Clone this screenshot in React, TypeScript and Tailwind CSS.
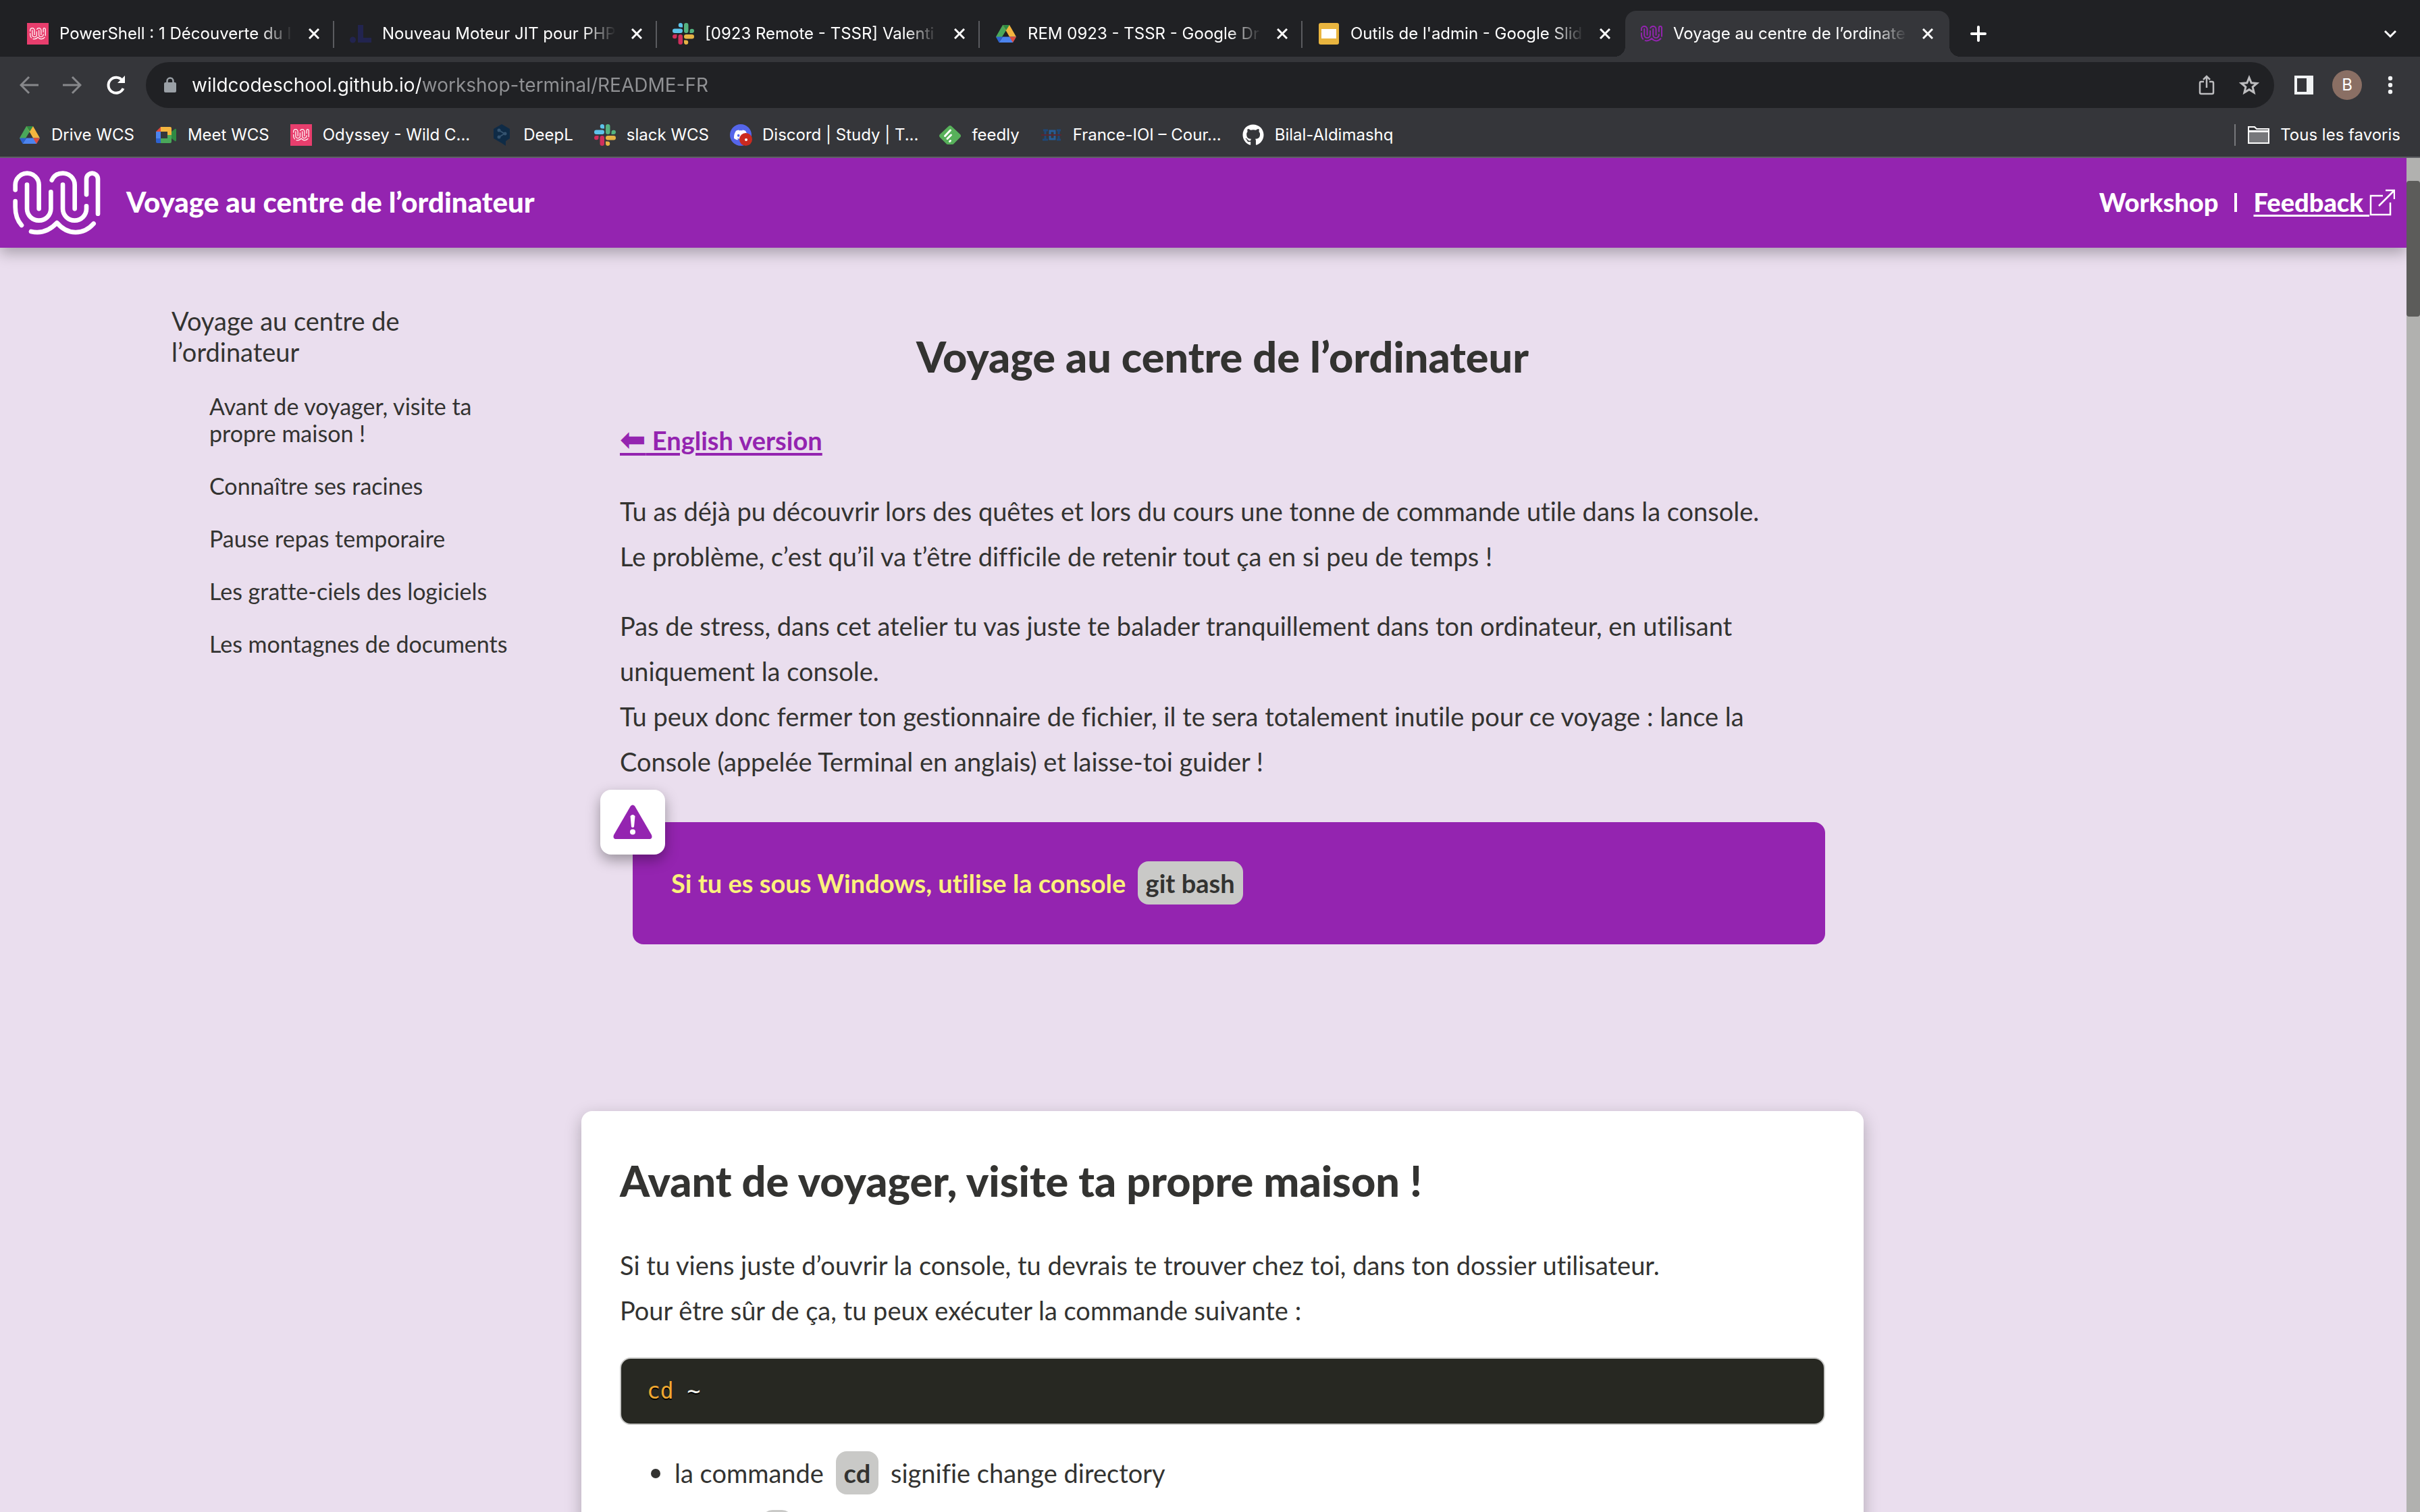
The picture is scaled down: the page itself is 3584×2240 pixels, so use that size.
import type { ReactNode } from "react";
import { FaGithub } from "react-icons/fa";
import { SiDiscord } from "react-icons/si";

function WildMark({ className, weight = 20 }: { className: string; weight?: number }) {
  return (
    <svg viewBox="57 63 390 285" className={className} fill="none" stroke="currentColor" strokeWidth={weight} strokeLinecap="round" strokeLinejoin="round" aria-hidden="true">
      <path d="M68 148V126A52.5 52 0 0 1 173 126V232" />
      <path d="M120 125V232A53 52 0 0 0 226 232V157" />
      <path d="M230 105C239 84 258 74 279 74A52.5 52 0 0 1 332 126V232" />
      <path d="M279 125V232A52.5 52 0 0 0 384 232V220" />
      <path d="M384 169V100A25.5 26 0 0 1 435 100V254" />
      <path d="M68 198V224C68 255 78 285 96 305" />
      <path d="M138 333C182 343 218 332 253 294C300 350 370 350 416 298" />
    </svg>
  );
}

function WildTile() {
  return (
    <span className="flex size-8 items-center justify-center bg-[#e83e6d] text-white">
      <WildMark className="w-6" />
    </span>
  );
}

function DriveIcon() {
  return (
    <svg viewBox="0 0 32 32" className="size-8" aria-hidden="true">
      <path d="M11 3L1 20.500L5.500 28L16 11Z" fill="#4aa85a" />
      <path d="M11 3H21L31 20.500H21Z" fill="#f4b53f" />
      <path d="M11 3H21L16 11Z" fill="#2f8a43" />
      <path d="M11 20.500H31L26 29H5.500Z" fill="#4c84ee" />
      <path d="M1 20.500H11L5.500 29Z" fill="#2d62cf" />
      <path d="M21 20.500H31L26 29Z" fill="#e04a3b" />
    </svg>
  );
}

function MeetIcon() {
  return (
    <svg viewBox="0 0 32 32" className="size-8" aria-hidden="true">
      <path d="M8 4L1 11H8Z" fill="#e04a3b" />
      <path d="M8 4H22Q24 4 24 6V16H18V11H8Z" fill="#f4b53f" />
      <path d="M1 11H8V21H1Z" fill="#4c84ee" />
      <path d="M1 21H8V28H3Q1 28 1 26Z" fill="#2d62cf" />
      <path d="M8 21H18V16H24V26Q24 28 22 28H8Z" fill="#4aa85a" />
      <path d="M24 11L29 7Q31 6 31 8V24Q31 26 29 25L24 21Z" fill="#2f8a43" />
    </svg>
  );
}

function SlackIcon() {
  return (
    <svg viewBox="0 0 32 32" className="size-8" aria-hidden="true">
      <g fill="#5dc3ea">
        <path d="M12 0A3.200 3.200 0 0 0 12 6.500H15V3.200A3.200 3.200 0 0 0 12 0Z" />
        <rect x="0" y="8.500" width="15" height="6.500" rx="3.200" />
      </g>
      <g fill="#54b380">
        <rect x="17" y="0" width="6.500" height="15" rx="3.200" />
        <path d="M32 12A3.200 3.200 0 0 0 25.500 12V15H28.800A3.200 3.200 0 0 0 32 12Z" />
      </g>
      <g fill="#e6b345">
        <rect x="17" y="17" width="15" height="6.500" rx="3.200" />
        <path d="M20 32A3.200 3.200 0 0 0 20 25.500H17V28.800A3.200 3.200 0 0 0 20 32Z" />
      </g>
      <g fill="#cf2f5d">
        <rect x="8.500" y="17" width="6.500" height="15" rx="3.200" />
        <path d="M0 20A3.200 3.200 0 0 0 6.500 20V17H3.200A3.200 3.200 0 0 0 0 20Z" />
      </g>
    </svg>
  );
}

function SlidesIcon() {
  return (
    <svg viewBox="0 0 32 32" className="size-8" aria-hidden="true">
      <rect x="1" y="0" width="30" height="32" rx="3" fill="#e9b53f" />
      <rect x="5" y="9" width="22" height="14" fill="#fff" />
    </svg>
  );
}

function DotLIcon() {
  return (
    <svg viewBox="0 0 32 32" className="size-8" fill="#22244f" aria-hidden="true">
      <circle cx="4.500" cy="25" r="4.500" />
      <path d="M12 3H20V22H32V29H12Z" />
    </svg>
  );
}

function DeepLIcon() {
  return (
    <svg viewBox="0 0 32 32" className="size-8" aria-hidden="true">
      <path d="M16 0L28 7V21L22 25V32L16 28L4 21V7Z" fill="#0f2b46" />
      <g stroke="#35536f" strokeWidth="2" fill="#35536f">
        <path d="M12 9L20 14L12 19" fill="none" />
        <circle cx="12" cy="9" r="1.500" />
        <circle cx="21" cy="14" r="1.500" />
        <circle cx="12" cy="19" r="1.500" />
      </g>
    </svg>
  );
}

function DiscordIcon() {
  return (
    <span className="relative flex size-8 items-center justify-center rounded-full bg-[#5566ea] text-white">
      <SiDiscord className="size-5" />
      <span className="absolute -right-px bottom-0 flex size-[19px] items-center justify-center rounded-full bg-[#cb2a20]">
        <span className="size-1 rounded-full bg-white" />
      </span>
    </span>
  );
}

function FeedlyIcon() {
  return (
    <svg viewBox="0 0 32 32" className="size-8" aria-hidden="true">
      <path d="M13.500 3.200Q16 1 18.500 3.200L31 15Q33 17 31 19.500L22 28.500Q21 30 19 30H13Q11 30 10 28.500L1 19.500Q-1 17 1 15Z" fill="#57b05a" />
      <g stroke="#fff" strokeWidth="3" strokeLinecap="round">
        <path d="M8.500 17.500L16.500 9" />
        <path d="M12 21.500L17.500 16" />
        <path d="M15.500 25.500L16.500 24.500" />
      </g>
    </svg>
  );
}

function IoiIcon() {
  return (
    <svg viewBox="0 0 32 32" className="size-8" fill="none" strokeWidth="3" aria-hidden="true">
      <path d="M4 9H11M7 9V23M3 23H11" stroke="#1f4777" />
      <rect x="14" y="10" width="7" height="12" stroke="#265c96" />
      <path d="M24 9H30M27 9V23M24 23H30" stroke="#1f4777" />
      <path d="M1 16H31" stroke="#5a2530" strokeWidth="2" />
    </svg>
  );
}

function CloseIcon() {
  return (
    <svg viewBox="0 0 16 16" className="size-4" stroke="currentColor" strokeWidth="3" aria-hidden="true">
      <path d="M1 1L15 15M15 1L1 15" />
    </svg>
  );
}

const tabs: { title: string; icon: ReactNode }[] = [
  { title: "PowerShell : 1 Découverte du l", icon: <WildTile /> },
  { title: "Nouveau Moteur JIT pour PHP", icon: <DotLIcon /> },
  { title: "[0923 Remote - TSSR] Valenti", icon: <SlackIcon /> },
  { title: "REM 0923 - TSSR - Google Dr", icon: <DriveIcon /> },
  { title: "Outils de l'admin - Google Slid", icon: <SlidesIcon /> },
  { title: "Voyage au centre de l’ordinate", icon: <WildMark className="w-8 text-[#9424b0]" weight={24} /> },
];

const bookmarks: { title: string; icon: ReactNode }[] = [
  { title: "Drive WCS", icon: <DriveIcon /> },
  { title: "Meet WCS", icon: <MeetIcon /> },
  { title: "Odyssey - Wild C...", icon: <WildTile /> },
  { title: "DeepL", icon: <DeepLIcon /> },
  { title: "slack WCS", icon: <SlackIcon /> },
  { title: "Discord | Study | T...", icon: <DiscordIcon /> },
  { title: "feedly", icon: <FeedlyIcon /> },
  { title: "France-IOI – Cour...", icon: <IoiIcon /> },
  { title: "Bilal-Aldimashq", icon: <FaGithub className="size-8 text-white" /> },
];

const chapters = [
  "Avant de voyager, visite ta propre maison !",
  "Connaître ses racines",
  "Pause repas temporaire",
  "Les gratte-ciels des logiciels",
  "Les montagnes de documents",
];

function TabStrip() {
  return (
    <div className="flex h-[84px] shrink-0 items-end bg-[#202124] pl-[17px] pr-[35px] text-[24px] text-white">
      {tabs.map((tab, i) => {
        const active = i === tabs.length - 1;
        return (
          <div
            key={tab.title}
            className={
              active
                ? "relative flex h-[68px] w-[480px] items-center rounded-t-2xl bg-[#35363a] pl-[23px] pr-6"
                : "relative flex h-[68px] w-[478px] items-center pl-[23px] pr-[22px]"
            }
          >
            {active && (
              <>
                <span className="absolute -left-4 bottom-0 size-4 bg-[radial-gradient(circle_at_0_0,#202124_16px,#35363a_16px)]" />
                <span className="absolute -right-4 bottom-0 size-4 bg-[radial-gradient(circle_at_100%_0,#202124_16px,#35363a_16px)]" />
              </>
            )}
            {tab.icon}
            <a href="#" className="ml-4 w-[346px] overflow-hidden whitespace-nowrap [mask-image:linear-gradient(90deg,#000_86%,transparent)]">
              {tab.title}
            </a>
            <button type="button" aria-label="Fermer l’onglet" className="ml-auto">
              <CloseIcon />
            </button>
            {i < tabs.length - 2 && <span className="absolute right-0 top-[15px] h-10 w-0.5 bg-[#5a5b5f]" />}
          </div>
        );
      })}
      <button type="button" aria-label="Nouvel onglet" className="mb-[22px] ml-[31px]">
        <svg viewBox="0 0 24 24" className="size-6" stroke="currentColor" strokeWidth="4" strokeLinecap="round" aria-hidden="true">
          <path d="M12 2V22M2 12H22" />
        </svg>
      </button>
      <button type="button" aria-label="Rechercher dans les onglets" className="mb-[25px] ml-auto">
        <svg viewBox="0 0 18 18" className="size-[18px]" fill="none" stroke="currentColor" strokeWidth="3" aria-hidden="true">
          <path d="M1 5L9 13L17 5" />
        </svg>
      </button>
    </div>
  );
}

function Toolbar() {
  return (
    <div className="flex h-[84px] shrink-0 items-center bg-[#35363a] pl-[29px] pr-10">
      <button type="button" aria-label="Précédent" className="text-[#87888b]">
        <svg viewBox="0 0 28 28" className="size-7" fill="none" stroke="currentColor" strokeWidth="3" aria-hidden="true">
          <path d="M14 2L2 14L14 26M2 14H28" />
        </svg>
      </button>
      <button type="button" aria-label="Suivant" className="ml-9 text-[#87888b]">
        <svg viewBox="0 0 28 28" className="size-7" fill="none" stroke="currentColor" strokeWidth="3" aria-hidden="true">
          <path d="M14 2L26 14L14 26M26 14H0" />
        </svg>
      </button>
      <button type="button" aria-label="Actualiser" className="ml-9 text-white">
        <svg viewBox="0 0 30 30" className="size-[30px]" fill="none" stroke="currentColor" strokeWidth="4" aria-hidden="true">
          <path d="M25.500 20A11.500 11.500 0 1 1 24 8" />
          <path d="M28 1V12H17Z" fill="currentColor" stroke="none" />
        </svg>
      </button>
      <div className="ml-[29px] flex h-[68px] grow items-center rounded-full bg-[#202124] pl-[27px] pr-[22px]">
        <svg viewBox="0 0 18 24" className="h-6 w-[18px]" aria-hidden="true">
          <rect x="0" y="8" width="18" height="15" rx="2" fill="#9aa0a6" />
          <path d="M4.500 9V6A4.500 4.500 0 0 1 13.500 6V9" fill="none" stroke="#9aa0a6" strokeWidth="2.500" />
        </svg>
        <input
          aria-label="Adresse"
          defaultValue="wildcodeschool.github.io/workshop-terminal/README-FR"
          className="ml-[23px] grow bg-[linear-gradient(90deg,#fff_339px,#919295_339px)] bg-clip-text text-[28px] text-transparent outline-none"
        />
        <button type="button" aria-label="Partager" className="text-[#bdbdbf]">
          <svg viewBox="0 0 24 30" className="h-[30px] w-6" fill="none" stroke="currentColor" strokeWidth="2.500" aria-hidden="true">
            <path d="M8 10H4Q2 10 2 12V26Q2 28 4 28H20Q22 28 22 26V12Q22 10 20 10H16M12 19V2M7 7L12 2L17 7" />
          </svg>
        </button>
        <button type="button" aria-label="Ajouter aux favoris" className="ml-9 text-[#bdbdbf]">
          <svg viewBox="0 0 30 30" className="size-[30px]" fill="none" stroke="currentColor" strokeWidth="3" aria-hidden="true">
            <path d="M15 4L18.200 11.800L26.500 12.400L20.100 17.800L22.100 26L15 21.600L7.900 26L9.900 17.800L3.500 12.400L11.800 11.800Z" />
          </svg>
        </button>
      </div>
      <button type="button" aria-label="Panneau latéral" className="ml-[30px] text-[#f1f3f4]">
        <svg viewBox="0 0 28 28" className="size-7" fill="currentColor" fillRule="evenodd" aria-hidden="true">
          <path d="M0 0H28V28H0ZM4 4V24H18V4Z" />
        </svg>
      </button>
      <button type="button" className="ml-7 flex size-11 items-center justify-center rounded-full bg-[#8a6f64] text-[24px] text-white">
        B
      </button>
      <button type="button" aria-label="Menu" className="ml-[38px] text-[#f1f3f4]">
        <svg viewBox="0 0 8 28" className="h-7 w-2" fill="currentColor" aria-hidden="true">
          <circle cx="4" cy="4" r="3.200" />
          <circle cx="4" cy="14" r="3.200" />
          <circle cx="4" cy="24" r="3.200" />
        </svg>
      </button>
    </div>
  );
}

function BookmarkBar() {
  return (
    <nav aria-label="Favoris" className="flex h-[66px] shrink-0 items-center gap-[31px] border-b-2 border-[#5f6064] bg-[#35363a] pl-7 pr-[29px] text-[24px] text-white">
      {bookmarks.map((b) => (
        <a key={b.title} href="#" className="flex items-center gap-4 whitespace-nowrap">
          {b.icon}
          {b.title}
        </a>
      ))}
      <a href="#" className="ml-auto flex h-8 items-center gap-4 border-l-2 border-[#77787b] pl-[18px]">
        <svg viewBox="0 0 32 26" className="h-[26px] w-8" fill="none" stroke="#fff" strokeWidth="2" aria-hidden="true">
          <path d="M1 7H31V25H1Z" fill="#77787b" />
          <path d="M1 25V1H10L13 4H31V25Z" />
          <path d="M1 8H31" />
        </svg>
        Tous les favoris
      </a>
    </nav>
  );
}

function Chip({ children }: { children: ReactNode }) {
  return (
    <code className="mx-2 rounded-2xl bg-[#c9c9c7] px-3 py-[9px] font-[Lato,sans-serif] text-[38px] font-bold text-[#333331]">
      {children}
    </code>
  );
}

function SiteHeader() {
  return (
    <header className="relative flex h-[133px] shrink-0 items-center bg-[#9424b0] pl-[19px] pr-[17px] text-white shadow-[0_8px_20px_rgba(0,0,0,0.28)]">
      <WildMark className="w-[130px]" />
      <span className="ml-[38px] pb-0.5 text-[42px] font-black">Voyage au centre de l’ordinateur</span>
      <nav className="ml-auto flex items-center gap-6 pb-0.5 text-[38px] font-black">
        <span>Workshop</span>
        <span className="h-7 w-1 bg-white" />
        <a href="#" className="flex items-center">
          <span className="whitespace-pre underline decoration-3 underline-offset-4">Feedback </span>
          <svg viewBox="0 0 38 40" className="h-10 w-[38px]" fill="none" stroke="currentColor" strokeWidth="2.500" aria-hidden="true">
            <path d="M20 10H2V38H31V20M14 25L36 3M24 2H37V15" />
          </svg>
        </a>
      </nav>
    </header>
  );
}

function Summary() {
  return (
    <nav aria-label="Sommaire" className="w-[500px] pt-[85px]">
      <a href="#" className="block text-[38px] leading-[46px]">
        Voyage au centre de l’ordinateur
      </a>
      <ul className="mt-[38px] flex flex-col gap-[38px] pl-14 text-[34px] leading-10">
        {chapters.map((c) => (
          <li key={c}>
            <a href="#">{c}</a>
          </li>
        ))}
      </ul>
    </nav>
  );
}

function Article() {
  return (
    <main className="text-[38px] leading-[67px]">
      <div className="px-[57px] pt-[121px]">
        <h1 className="text-center text-[63px] font-black leading-[80px]">Voyage au centre de l’ordinateur</h1>
        <p className="mt-[51px]">
          <a href="#" className="font-bold text-[#9424b0] underline decoration-4 underline-offset-4">
            <span className="font-['DejaVu_Sans',sans-serif] text-[46px] leading-none">⬅</span> English version
          </a>
        </p>
        <p className="mt-[38px]">
          Tu as déjà pu découvrir lors des quêtes et lors du cours une tonne de commande utile dans la console.
          <br />
          Le problème, c’est qu’il va t’être difficile de retenir tout ça en si peu de temps !
        </p>
        <p className="mt-9">
          Pas de stress, dans cet atelier tu vas juste te balader tranquillement dans ton ordinateur, en utilisant
          <br />
          uniquement la console.
          <br />
          Tu peux donc fermer ton gestionnaire de fichier, il te sera totalement inutile pour ce voyage : lance la
          <br />
          Console (appelée Terminal en anglais) et laisse-toi guider !
        </p>
        <div role="note" className="relative ml-[19px] mt-14 rounded-2xl bg-[#9424b0] px-[57px] py-[57px] font-bold text-[#fbf17c]">
          <span className="absolute -left-12 -top-12 flex size-24 items-center justify-center rounded-2xl bg-white text-[#9424b0] shadow-[0_8px_20px_rgba(0,0,0,0.35)]">
            <svg viewBox="0 0 58 52" className="h-[52px] w-[58px]" aria-hidden="true">
              <path d="M26 2Q29 -1 32 2L57 45Q59 51 53 51H5Q-1 51 1 45Z" fill="currentColor" />
              <path d="M25.500 17Q29 13 32.500 17L31 33Q29 35 27 33Z" fill="#fff" />
              <circle cx="29" cy="40.500" r="4" fill="#fff" />
            </svg>
          </span>
          <p>
            Si tu es sous Windows, utilise la console <Chip>git bash</Chip>
          </p>
        </div>
      </div>
      <section className="mt-[247px] rounded-2xl bg-white px-[57px] pb-14 pt-[63px] shadow-[0_8px_24px_rgba(0,0,0,0.25)]">
        <h2 className="text-[63px] font-black leading-[80px]">Avant de voyager, visite ta propre maison !</h2>
        <p className="mt-[52px]">
          Si tu viens juste d’ouvrir la console, tu devrais te trouver chez toi, dans ton dossier utilisateur.
          <br />
          Pour être sûr de ça, tu peux exécuter la commande suivante :
        </p>
        <pre className="mt-9 rounded-2xl border-2 border-[#c9c9c7] bg-[#272822] px-[38px] py-6 font-['DejaVu_Sans_Mono',monospace] text-[33px] leading-[48px] text-[#f8f8f2] [text-shadow:0_2px_#000]">
          <code className="font-['DejaVu_Sans_Mono',monospace] text-[33px]">
            <span className="text-[#f0a830]">cd</span> ~
          </code>
        </pre>
        <ul className="mt-[38px] flex flex-col gap-5 pl-[46px]">
          <li className="flex items-center">
            <span className="mr-[21px] size-3.5 rounded-full bg-[#333331]" />
            <span>
              la commande <Chip>cd</Chip> signifie change directory
            </span>
          </li>
          <li className="pl-[156px]">
            <Chip>~</Chip>
          </li>
        </ul>
      </section>
    </main>
  );
}

export default function App() {
  return (
    <div className="flex h-screen flex-col overflow-hidden bg-[#eadeee] font-[Inter,sans-serif]">
      <TabStrip />
      <Toolbar />
      <BookmarkBar />
      <div className="flex min-h-0 grow font-[Lato,sans-serif] text-[#333331] [font-variant-ligatures:no-common-ligatures]">
        <div className="flex min-w-0 grow flex-col overflow-hidden">
          <SiteHeader />
          <div className="grid grid-cols-[607px_minmax(0,1fr)] pl-[254px] pr-[804px]">
            <Summary />
            <Article />
          </div>
        </div>
        <div className="w-5 shrink-0 bg-[#b1b1af] pt-[34px]">
          <div className="h-[201px] rounded-sm bg-[#5c5c5a]" />
        </div>
      </div>
    </div>
  );
}
